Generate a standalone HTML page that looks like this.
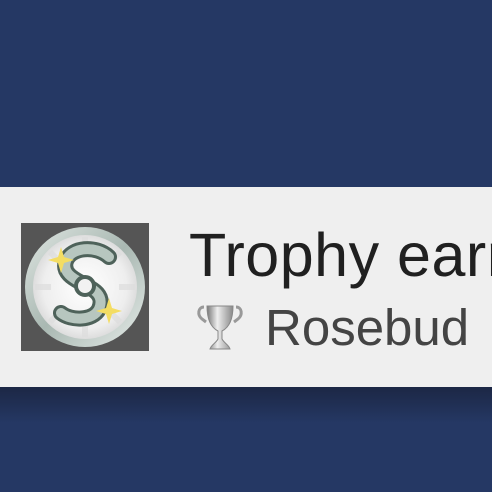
<!DOCTYPE html>
<html><head><meta charset="utf-8"><style>
html,body{margin:0;padding:0}
body{width:492px;height:492px;background:#253864;position:relative;overflow:hidden;font-family:"Liberation Sans","DejaVu Sans",sans-serif}
.shadow{position:absolute;left:0;top:387px;width:492px;height:36px;background:linear-gradient(#1c2745,#253864)}
.banner{position:absolute;left:0;top:187px;width:492px;height:200px;background:#efefef;overflow:hidden}
.icon{position:absolute;left:21px;top:36px;width:128px;height:128px;background:#555}
.t1{position:absolute;left:189px;top:33px;font-size:61px;color:#202020;white-space:nowrap;line-height:70px;letter-spacing:0.5px}
.t2{position:absolute;left:265px;top:111px;font-size:51px;color:#444;white-space:nowrap;line-height:60px}
.cup{position:absolute;left:196px;top:116px}
</style></head><body>
<div class="shadow"></div>
<div class="banner">
<div class="icon">
<svg width="128" height="128" viewBox="0 0 128 128">
<defs>
<radialGradient id="g" cx="50%" cy="50%" r="50%"><stop offset="0" stop-color="#fff"/><stop offset="0.8" stop-color="#eee"/><stop offset="1" stop-color="#ddd"/></radialGradient>
<linearGradient id="r" x1="0" y1="0" x2="1" y2="1"><stop offset="0" stop-color="#dfe6e2"/><stop offset="0.5" stop-color="#a9b8b2"/><stop offset="1" stop-color="#e6ece9"/></linearGradient>
</defs>
<circle cx="64" cy="64" r="60" fill="url(#r)"/>
<circle cx="64" cy="64" r="52" fill="url(#g)"/>
<g stroke="#ddd" stroke-width="6" opacity="0.7">
<line x1="64" y1="14" x2="64" y2="30"/><line x1="64" y1="98" x2="64" y2="114"/>
<line x1="14" y1="64" x2="30" y2="64"/><line x1="98" y1="64" x2="114" y2="64"/>
<line x1="29" y1="29" x2="40" y2="40"/><line x1="88" y1="88" x2="99" y2="99"/>
<line x1="99" y1="29" x2="88" y2="40"/><line x1="29" y1="99" x2="40" y2="88"/>
</g>
<path d="M88 34 C75 22 50 24 45 38 C40 52 58 58 64 62 C72 66 84 72 78 86 C72 98 50 98 40 90" fill="none" stroke="#4e625a" stroke-width="16" stroke-linecap="round"/>
<path d="M88 34 C75 22 50 24 45 38 C40 52 58 58 64 62 C72 66 84 72 78 86 C72 98 50 98 40 90" fill="none" stroke="#b7c6bf" stroke-width="10" stroke-linecap="round"/>
<circle cx="64" cy="63" r="9" fill="#f2f2f2" stroke="#4e625a" stroke-width="4"/>
<path d="M40 24 L43 34 L53 37 L43 40 L40 50 L37 40 L27 37 L37 34Z" fill="#f4dd63"/>
<path d="M88 75 L91 85 L101 88 L91 91 L88 101 L85 91 L75 88 L85 85Z" fill="#f4dd63"/>
</svg>
</div>
<div class="t1">Trophy earn</div>
<svg class="cup" width="48" height="48" viewBox="0 0 48 48">
<defs><linearGradient id="c" x1="0" x2="1"><stop offset="0" stop-color="#777"/><stop offset="0.4" stop-color="#eee"/><stop offset="1" stop-color="#888"/></linearGradient></defs>
<path d="M8 4 C2 4 1 12 6 16 L10 19" fill="none" stroke="#999" stroke-width="3"/>
<path d="M40 4 C46 4 47 12 42 16 L38 19" fill="none" stroke="#999" stroke-width="3"/>
<path d="M11 3 H37 C37 18 32 25 26 28 L26 36 C28 40 33 42 34 46 H14 C15 42 20 40 22 36 L22 28 C16 25 11 18 11 3Z" fill="url(#c)" stroke="#888" stroke-width="1"/>
</svg>
<div class="t2">Rosebud</div>
</div>
</body></html>
